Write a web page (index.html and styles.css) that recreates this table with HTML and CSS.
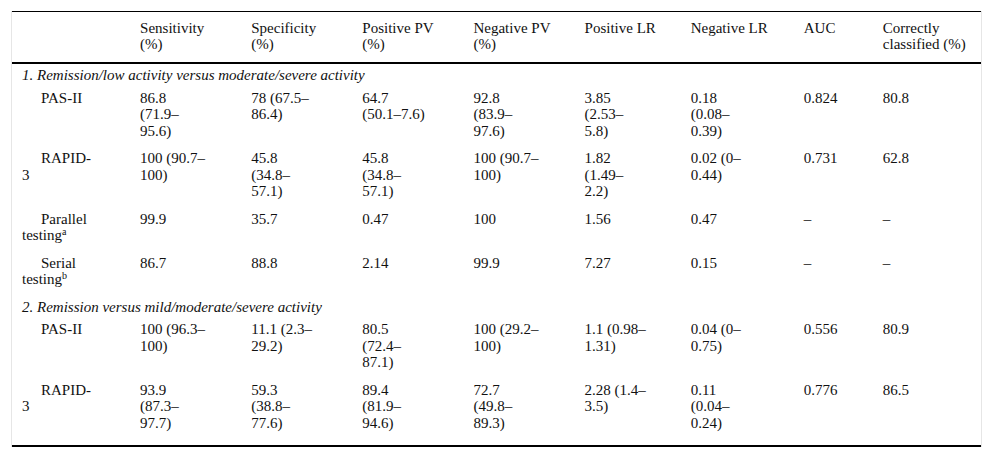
FILE: index.html
```html
<!DOCTYPE html>
<html lang="en">
<head>
<meta charset="utf-8">
<title>Diagnostic performance</title>
<link rel="stylesheet" href="styles.css">
</head>
<body>
<div class="table-wrap">
  <table class="data">
    <colgroup>
      <col class="c1"><col class="c2"><col class="c3"><col class="c4"><col class="c5"><col class="c6"><col class="c7"><col class="c8"><col class="c9">
    </colgroup>
    <thead>
      <tr>
        <th></th>
        <th>Sensitivity (%)</th>
        <th>Specificity (%)</th>
        <th>Positive PV (%)</th>
        <th>Negative PV (%)</th>
        <th>Positive LR</th>
        <th>Negative LR</th>
        <th>AUC</th>
        <th>Correctly classified (%)</th>
      </tr>
    </thead>
    <tbody>
      <tr class="section"><td colspan="9">1. Remission/low activity versus moderate/severe activity</td></tr>
      <tr>
        <td class="label">PAS-II</td>
        <td>86.8 (71.9–95.6)</td>
        <td>78 (67.5–86.4)</td>
        <td>64.7 (50.1–7.6)</td>
        <td>92.8 (83.9–97.6)</td>
        <td>3.85 (2.53–5.8)</td>
        <td>0.18 (0.08–0.39)</td>
        <td>0.824</td>
        <td>80.8</td>
      </tr>
      <tr>
        <td class="label">RAPID-3</td>
        <td>100 (90.7–100)</td>
        <td>45.8 (34.8–57.1)</td>
        <td>45.8 (34.8–57.1)</td>
        <td>100 (90.7–100)</td>
        <td>1.82 (1.49–2.2)</td>
        <td>0.02 (0–0.44)</td>
        <td>0.731</td>
        <td>62.8</td>
      </tr>
      <tr>
        <td class="label">Parallel testing<sup>a</sup></td>
        <td>99.9</td>
        <td>35.7</td>
        <td>0.47</td>
        <td>100</td>
        <td>1.56</td>
        <td>0.47</td>
        <td>–</td>
        <td>–</td>
      </tr>
      <tr>
        <td class="label">Serial testing<sup>b</sup></td>
        <td>86.7</td>
        <td>88.8</td>
        <td>2.14</td>
        <td>99.9</td>
        <td>7.27</td>
        <td>0.15</td>
        <td>–</td>
        <td>–</td>
      </tr>
      <tr class="section"><td colspan="9">2. Remission versus mild/moderate/severe activity</td></tr>
      <tr>
        <td class="label">PAS-II</td>
        <td>100 (96.3–100)</td>
        <td>11.1 (2.3–29.2)</td>
        <td>80.5 (72.4–87.1)</td>
        <td>100 (29.2–100)</td>
        <td>1.1 (0.98–1.31)</td>
        <td>0.04 (0–0.75)</td>
        <td>0.556</td>
        <td>80.9</td>
      </tr>
      <tr class="last">
        <td class="label">RAPID-3</td>
        <td>93.9 (87.3–97.7)</td>
        <td>59.3 (38.8–77.6)</td>
        <td>89.4 (81.9–94.6)</td>
        <td>72.7 (49.8–89.3)</td>
        <td>2.28 (1.4–3.5)</td>
        <td>0.11 (0.04–0.24)</td>
        <td>0.776</td>
        <td>86.5</td>
      </tr>
    </tbody>
  </table>
</div>
</body>
</html>
```

FILE: styles.css
```css
html, body {
  margin: 0;
  padding: 0;
  background: #ffffff;
}

body {
  font-family: "Liberation Serif", "Times New Roman", serif;
  font-size: 15px;
  line-height: 16.5px;
  color: #111111;
}

.table-wrap {
  margin: 11px 0 0 11px;
  width: 969px;
  border-left: 1px solid #e6e6e6;
  border-right: 1px solid #e6e6e6;
}

.data {
  width: 969px;
  table-layout: fixed;
  border-collapse: collapse;
  border-top: 1px solid #000000;
  border-bottom: 2px solid #000000;
}

.c1 { width: 118px; }
.c2, .c3, .c4, .c5 { width: 111px; }
.c6 { width: 106px; }
.c7 { width: 113px; }
.c8 { width: 79px; }
.c9 { width: 108px; }

.data th,
.data td {
  text-align: left;
  vertical-align: top;
  font-weight: normal;
  padding: 3px 34px 8px 10px;
}

.data th {
  line-height: 16px;
  padding: 8px 16px 10px 10px;
  border-bottom: 2px solid #000000;
}

.data td:nth-child(1) { padding-right: 38px; }
.data td:nth-child(6) { padding-right: 34px; }
.data td:nth-child(7) { padding-right: 36px; }
.data td:nth-child(8),
.data td:nth-child(9) { padding-right: 10px; }

.data th:nth-child(6),
.data th:nth-child(8),
.data th:nth-child(9) { padding-right: 10px; }

.data .section td {
  font-style: italic;
  padding: 3px 10px 3px 10px;
}

.data .last td {
  padding-bottom: 14px;
}

.data td.label {
  text-indent: 19px;
}

.data sup {
  font-size: 10px;
  line-height: 0;
  vertical-align: 5px;
}
```
